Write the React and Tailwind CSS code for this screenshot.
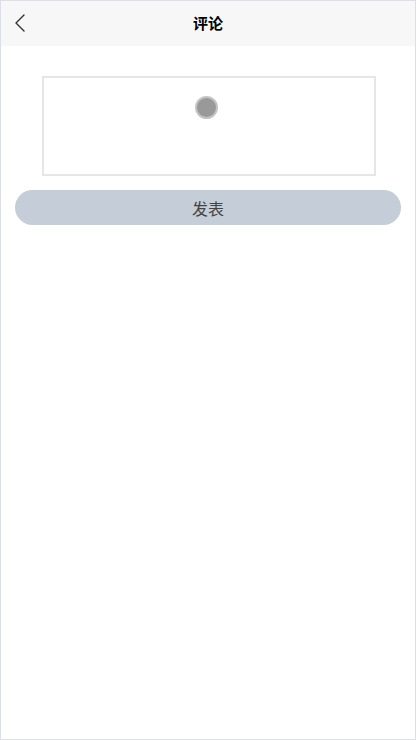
import React from "react";

export default function App() {
  return (
    <div
      className="w-[416px] h-[740px] border border-[#dedee8] bg-white flex flex-col"
      style={{ fontFamily: '"Noto Sans CJK SC", "Noto Sans", sans-serif' }}
    >
      <div className="h-[45px] bg-[#f7f7f7] flex items-center relative shrink-0">
        <div className="absolute left-[12px] top-[12px]">
          <svg width="14" height="20" viewBox="0 0 14 20" fill="none">
            <path d="M11 2 L3 10 L11 18" stroke="#333" strokeWidth="1.4" strokeLinecap="round" strokeLinejoin="round" />
          </svg>
        </div>
        <div className="flex-1 text-center text-[15px] font-bold text-black">评论</div>
      </div>
      <div className="flex pt-[30px] pl-[41px]">
        <div className="w-[334px] h-[100px] border-2 border-[#e6e6e6] flex pl-[151px] pt-[18px]">
          <div className="w-[23px] h-[23px] rounded-full bg-[#999999] border-2 border-[#c4c4c4]" />
        </div>
      </div>
      <div className="px-[14px] pt-[14px]">
        <div className="h-[35px] rounded-full bg-[#c5cdd8] flex items-center justify-center text-[16px] text-[#444]">
          发表
        </div>
      </div>
    </div>
  );
}
